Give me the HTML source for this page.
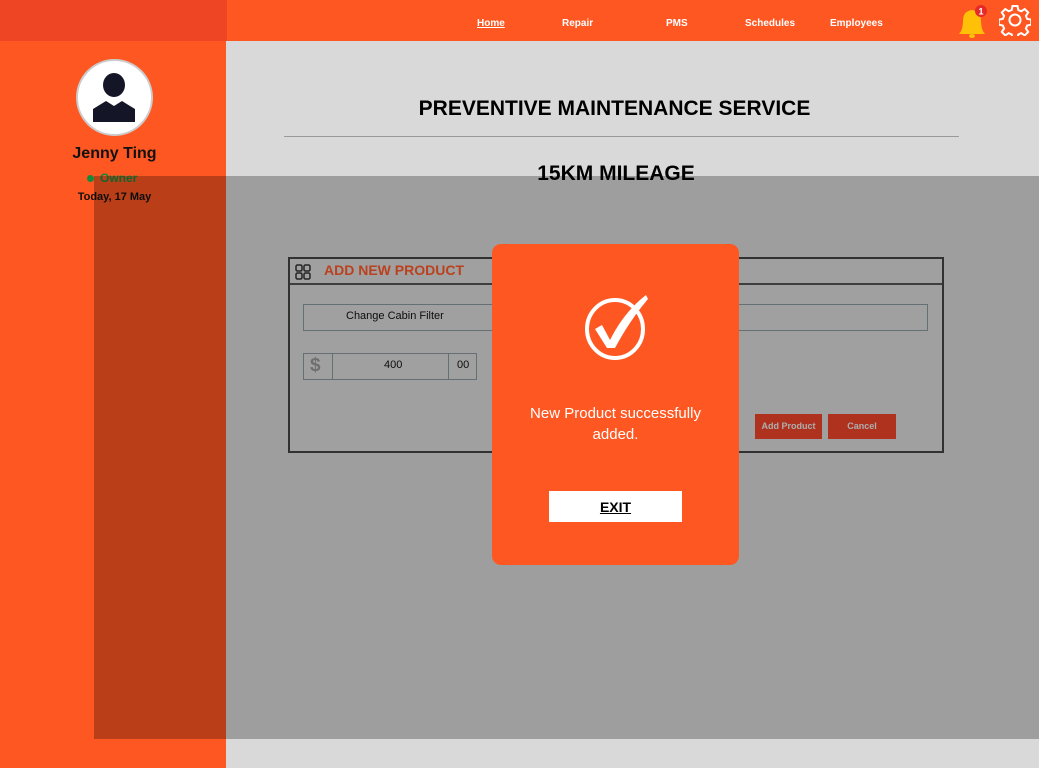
<!DOCTYPE html>
<html><head><style>
*{margin:0;padding:0;box-sizing:border-box}
body{width:1039px;height:768px;position:relative;overflow:hidden;background:#d9d9d9;font-family:"Liberation Sans",sans-serif}
.a{position:absolute}
.nav{top:18px;color:#fff;font-weight:bold;font-size:10px}
</style></head><body>
<div class="a" style="left:0;top:0;width:1039px;height:41px;background:#ff5722"></div>
<div class="a" style="left:0;top:0;width:227px;height:41px;background:#ee4524"></div>
<div class="a" style="left:0;top:41px;width:226px;height:727px;background:#ff5722"></div>
<div class="a nav" style="left:477px;text-decoration:underline">Home</div>
<div class="a nav" style="left:562px">Repair</div>
<div class="a nav" style="left:666px">PMS</div>
<div class="a nav" style="left:745px">Schedules</div>
<div class="a nav" style="left:830px">Employees</div>
<svg class="a" style="left:955px;top:3px" width="36" height="38" viewBox="0 0 36 38"><path d="M4 31 Q8 27 8 18 Q8 8 17 7 Q26 8 26 18 Q26 27 30 31 Z" fill="#ffc107"/><ellipse cx="17" cy="33" rx="3" ry="2" fill="#ffc107"/><circle cx="26" cy="8" r="6" fill="#e52a2a"/><text x="26" y="11.5" font-size="9" font-weight="bold" fill="#fff" text-anchor="middle" font-family="Liberation Sans">1</text></svg>
<svg class="a" style="left:999px;top:4px" width="32" height="32" viewBox="0 0 32 32"><path d="M13.5 2h5l.8 4 3 1.3 3.4-2.3 3.5 3.5-2.3 3.4 1.3 3 4 .8v5l-4 .8-1.3 3 2.3 3.4-3.5 3.5-3.4-2.3-3 1.3-.8 4h-5l-.8-4-3-1.3-3.4 2.3-3.5-3.5 2.3-3.4-1.3-3-4-.8v-5l4-.8 1.3-3-2.3-3.4 3.5-3.5 3.4 2.3 3-1.3z" fill="none" stroke="#fff" stroke-width="2"/><circle cx="16" cy="16" r="5.5" fill="none" stroke="#fff" stroke-width="2"/></svg>
<div class="a" style="left:76px;top:59px;width:77px;height:77px;border-radius:50%;background:#fff;border:2px solid #ccc"></div>
<svg class="a" style="left:92px;top:72px" width="44" height="50" viewBox="0 0 44 50"><ellipse cx="22" cy="13" rx="11" ry="12" fill="#151528"/><path d="M1 37 L14 29 L22 34 L30 29 L43 37 L43 50 L1 50Z" fill="#151528"/></svg>
<div class="a" style="left:0;width:229px;top:145px;text-align:center;font-weight:bold;font-size:16px;color:#111">Jenny Ting</div>
<div class="a" style="left:87px;top:175px;width:7px;height:7px;border-radius:50%;background:#148a3a"></div>
<div class="a" style="left:100px;top:171px;font-weight:bold;font-size:12px;color:#148a3a">Owner</div>
<div class="a" style="left:0;width:229px;top:191px;text-align:center;font-weight:bold;font-size:11px;color:#111">Today, 17 May</div>
<div class="a" style="left:226px;width:777px;top:97px;text-align:center;font-weight:bold;font-size:21px;color:#000">PREVENTIVE MAINTENANCE SERVICE</div>
<div class="a" style="left:284px;top:136px;width:675px;height:1px;background:#999"></div>
<div class="a" style="left:226px;width:780px;top:162px;text-align:center;font-weight:bold;font-size:21px;color:#000">15KM MILEAGE</div>
<div class="a" style="left:288px;top:257px;width:656px;height:196px;background:#dcdcdc;border:2px solid #444"></div>
<div class="a" style="left:290px;top:283px;width:652px;height:2px;background:#555"></div>
<svg class="a" style="left:295px;top:264px" width="16" height="16" viewBox="0 0 16 16"><g fill="none" stroke="#333" stroke-width="1.5"><rect x="1" y="1" width="6" height="6" rx="1.5"/><rect x="9" y="1" width="6" height="6" rx="1.5"/><rect x="1" y="9" width="6" height="6" rx="1.5"/><rect x="9" y="9" width="6" height="6" rx="1.5"/></g></svg>
<div class="a" style="left:324px;top:262px;font-weight:bold;font-size:14px;color:#ff5a2a">ADD NEW PRODUCT</div>
<div class="a" style="left:303px;top:304px;width:625px;height:27px;border:1px solid #8a9aa0;background:#dcdcdc;font-size:11px;padding:5px 0 0 42px;color:#111">Change Cabin Filter</div>
<div class="a" style="left:303px;top:353px;width:174px;height:27px;border:1px solid #8a9aa0;background:#dcdcdc"></div>
<div class="a" style="left:332px;top:353px;width:1px;height:27px;background:#8a9aa0"></div>
<div class="a" style="left:448px;top:353px;width:1px;height:27px;background:#8a9aa0"></div>
<div class="a" style="left:310px;top:355px;font-size:19px;font-weight:bold;color:#999">$</div>
<div class="a" style="left:384px;top:359px;font-size:11px;color:#111">400</div>
<div class="a" style="left:457px;top:359px;font-size:11px;color:#111">00</div>
<div class="a" style="left:755px;top:414px;width:67px;height:25px;background:#f0452a;color:#eee;font-size:9px;font-weight:bold;text-align:center;line-height:25px">Add Product</div>
<div class="a" style="left:828px;top:414px;width:68px;height:25px;background:#f0452a;color:#eee;font-size:9px;font-weight:bold;text-align:center;line-height:25px">Cancel</div>
<div class="a" style="left:94px;top:176px;width:945px;height:563px;background:rgba(0,0,0,0.27)"></div>
<div class="a" style="left:492px;top:244px;width:247px;height:321px;background:#ff5722;border-radius:9px"></div>
<svg class="a" style="left:580px;top:290px" width="72" height="74" viewBox="0 0 72 74"><ellipse cx="35" cy="39" rx="28" ry="29" fill="none" stroke="#fff" stroke-width="4"/><path d="M15 39 L22 35 L30 50 Q44 22 66 5 L68 9 Q50 30 35 58 L27 58 Z" fill="#fff"/></svg>
<div class="a" style="left:492px;width:247px;top:403px;text-align:center;color:#fff;font-size:15px;line-height:21px">New Product successfully<br>added.</div>
<div class="a" style="left:549px;top:491px;width:133px;height:31px;background:#fff;text-align:center;line-height:33px;font-weight:bold;font-size:14px;text-decoration:underline;color:#000">EXIT</div>
</body></html>
